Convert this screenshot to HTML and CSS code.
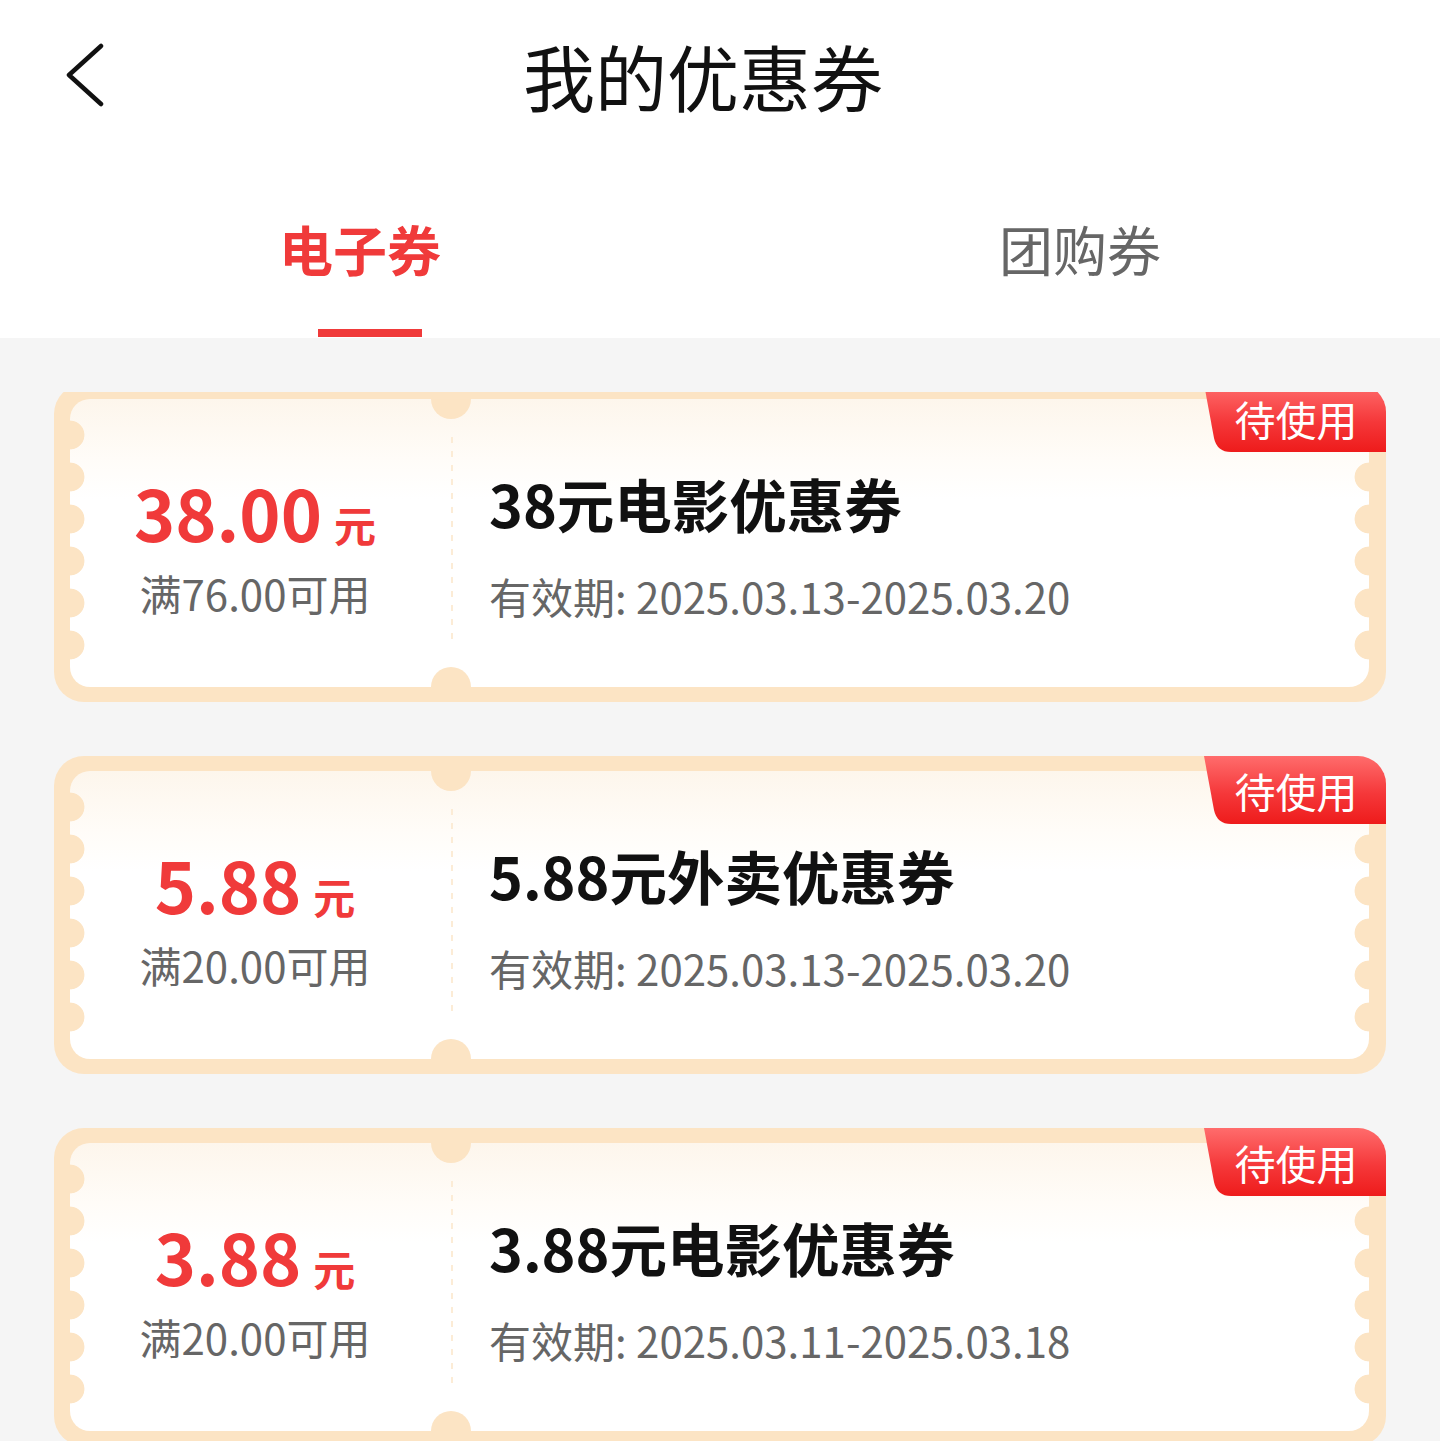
FILE: index.html
```html
<!DOCTYPE html>
<html>

<head>
    <title>我的优惠券</title>
    <meta charset='utf-8'>
    <link rel="stylesheet" href="styles.css">
</head>

<body>
    <div id='header'>
        <div class='topbar'>
            <div class='back'>
                <svg width='40' height='64' viewBox='0 0 40 64'>
                    <path d='M35 3 L3 32 L35 61' fill='none' stroke='#111' stroke-width='4.5' stroke-linecap='round' stroke-linejoin='round'/>
                </svg>
            </div>
            <div class='title'>我的优惠券</div>
            <div class='back spacer'></div>
        </div>

        <div class='tabs'>
            <div class='tab active'>
                <span class='tab-text'>电子券</span>
                <span class='tab-line'></span>
            </div>
            <div class='tab'>
                <span class='tab-text'>团购券</span>
                <span class='tab-line'></span>
            </div>
        </div>
    </div>

    <div id='main'>
        <div class='scroller'>
            <div class='list'>

                <div class='coupon'>
                    <div class='coupon-inner'>
                        <div class='scallop left'></div>
                        <div class='scallop right'></div>
                        <div class='dash'></div>
                        <div class='amount-col'>
                            <div class='amount'>38.00<span class='unit'>元</span></div>
                            <div class='cond'>满76.00可用</div>
                        </div>
                        <div class='info-col'>
                            <div class='name'>38元电影优惠券</div>
                            <div class='date'>有效期: 2025.03.13-2025.03.20</div>
                        </div>
                    </div>
                    <div class='badge'>待使用</div>
                </div>

                <div class='coupon'>
                    <div class='coupon-inner'>
                        <div class='scallop left'></div>
                        <div class='scallop right'></div>
                        <div class='dash'></div>
                        <div class='amount-col'>
                            <div class='amount'>5.88<span class='unit'>元</span></div>
                            <div class='cond'>满20.00可用</div>
                        </div>
                        <div class='info-col'>
                            <div class='name'>5.88元外卖优惠券</div>
                            <div class='date'>有效期: 2025.03.13-2025.03.20</div>
                        </div>
                    </div>
                    <div class='badge'>待使用</div>
                </div>

                <div class='coupon'>
                    <div class='coupon-inner'>
                        <div class='scallop left'></div>
                        <div class='scallop right'></div>
                        <div class='dash'></div>
                        <div class='amount-col'>
                            <div class='amount'>3.88<span class='unit'>元</span></div>
                            <div class='cond'>满20.00可用</div>
                        </div>
                        <div class='info-col'>
                            <div class='name'>3.88元电影优惠券</div>
                            <div class='date'>有效期: 2025.03.11-2025.03.18</div>
                        </div>
                    </div>
                    <div class='badge'>待使用</div>
                </div>

            </div>
        </div>
    </div>
</body>

</html>
```

FILE: styles.css
```css
html,
body {
    padding: 0px;
    margin: 0px;
    height: 1441px;
    overflow: hidden
}

body {
    background: #f5f5f5;
    font-family: "Noto Sans CJK SC", "Noto Sans", sans-serif;
    color: #111
}

#header {
    background: #fff
}

.topbar {
    height: 150px;
    padding-bottom: 10px;
    padding-left: 66px;
    padding-right: 58px;
    display: flex;
    align-items: center
}

.back {
    width: 48px;
    display: flex;
    align-items: center
}

.back.spacer {
    width: 90px
}

.title {
    flex: 1;
    text-align: center;
    font-size: 72px;
    line-height: 100px;
    color: #111
}

.tabs {
    display: flex
}

.tab {
    flex: 1;
    display: flex;
    flex-direction: column;
    align-items: center;
    padding-top: 53px;
    padding-bottom: 1px
}

.tab-text {
    font-size: 54px;
    line-height: 72px;
    color: #666
}

.tab-line {
    width: 104px;
    height: 8px;
    margin-top: 44px;
    margin-left: 20px;
    background: transparent
}

.tab.active .tab-text {
    color: #f03a3a;
    font-weight: 700
}

.tab.active .tab-line {
    background: #f03a3a
}

#main {
    padding-top: 54px
}

.scroller {
    height: 1049px;
    overflow: hidden
}

.list {
    margin-top: -8px;
    padding-left: 54px;
    padding-right: 54px;
    display: flex;
    flex-direction: column;
    gap: 54px
}

.coupon {
    position: relative;
    height: 318px;
    box-sizing: border-box;
    padding: 15px 17px 15px 16px;
    background: #fce4c4;
    border-radius: 30px;
    flex-shrink: 0
}

.coupon-inner {
    position: relative;
    height: 100%;
    overflow: hidden;
    border-radius: 20px;
    background: linear-gradient(180deg, #fdf6ec 0px, #fffcf8 60px, #fff 100px);
    display: flex;
    align-items: center
}

.coupon-inner::before,
.coupon-inner::after {
    content: '';
    position: absolute;
    left: 361px;
    width: 40px;
    height: 40px;
    border-radius: 50%;
    background: #fce4c4
}

.coupon-inner::before {
    top: -20px
}

.coupon-inner::after {
    bottom: -20px
}

.scallop {
    position: absolute;
    top: 50%;
    height: 252px;
    margin-top: -129px;
    width: 15px;
    background-size: 15px 42px;
    background-repeat: repeat-y
}

.scallop.left {
    left: 0px;
    background-image: radial-gradient(circle at 0 50%, #fce4c4 14px, transparent 14.8px)
}

.scallop.right {
    right: 0px;
    background-image: radial-gradient(circle at 100% 50%, #fce4c4 14px, transparent 14.8px)
}

.dash {
    position: absolute;
    left: 381px;
    top: 38px;
    bottom: 40px;
    width: 2px;
    background: repeating-linear-gradient(180deg, #fcecd6 0px, #fcecd6 6px, transparent 6px, transparent 14px)
}

.amount-col {
    width: 370px;
    display: flex;
    flex-direction: column;
    align-items: center;
    padding-top: 7px
}

.amount {
    color: #f03a3a;
    font-weight: 700;
    font-size: 70px;
    line-height: 80px;
    white-space: nowrap
}

.unit {
    font-size: 42px;
    margin-left: 12px
}

.cond {
    margin-top: 1px;
    font-size: 42px;
    line-height: 56px;
    color: #666;
    white-space: nowrap
}

.info-col {
    padding-left: 49px;
    padding-top: 6px
}

.name {
    font-size: 57.5px;
    line-height: 70px;
    font-weight: 700;
    color: #111;
    white-space: nowrap
}

.date {
    margin-top: 30px;
    font-size: 42px;
    line-height: 56px;
    color: #666;
    white-space: nowrap
}

.badge {
    position: absolute;
    top: 0px;
    right: 0px;
    width: 182px;
    height: 68px;
    display: flex;
    align-items: center;
    justify-content: center;
    padding-left: 2px;
    box-sizing: border-box;
    isolation: isolate;
    color: #fff;
    font-size: 41px;
    line-height: 50px
}

.badge::before {
    content: '';
    position: absolute;
    left: 0px;
    top: 0px;
    width: 182px;
    height: 68px;
    z-index: -1;
    clip-path: path('M0 0 L10 54 Q13 68 27 68 H182 V28 A28 28 0 0 0 154 0 Z');
    background: linear-gradient(180deg, #ff6c6c 0%, #f5383a 55%, #ee1b1b 100%)
}
```
